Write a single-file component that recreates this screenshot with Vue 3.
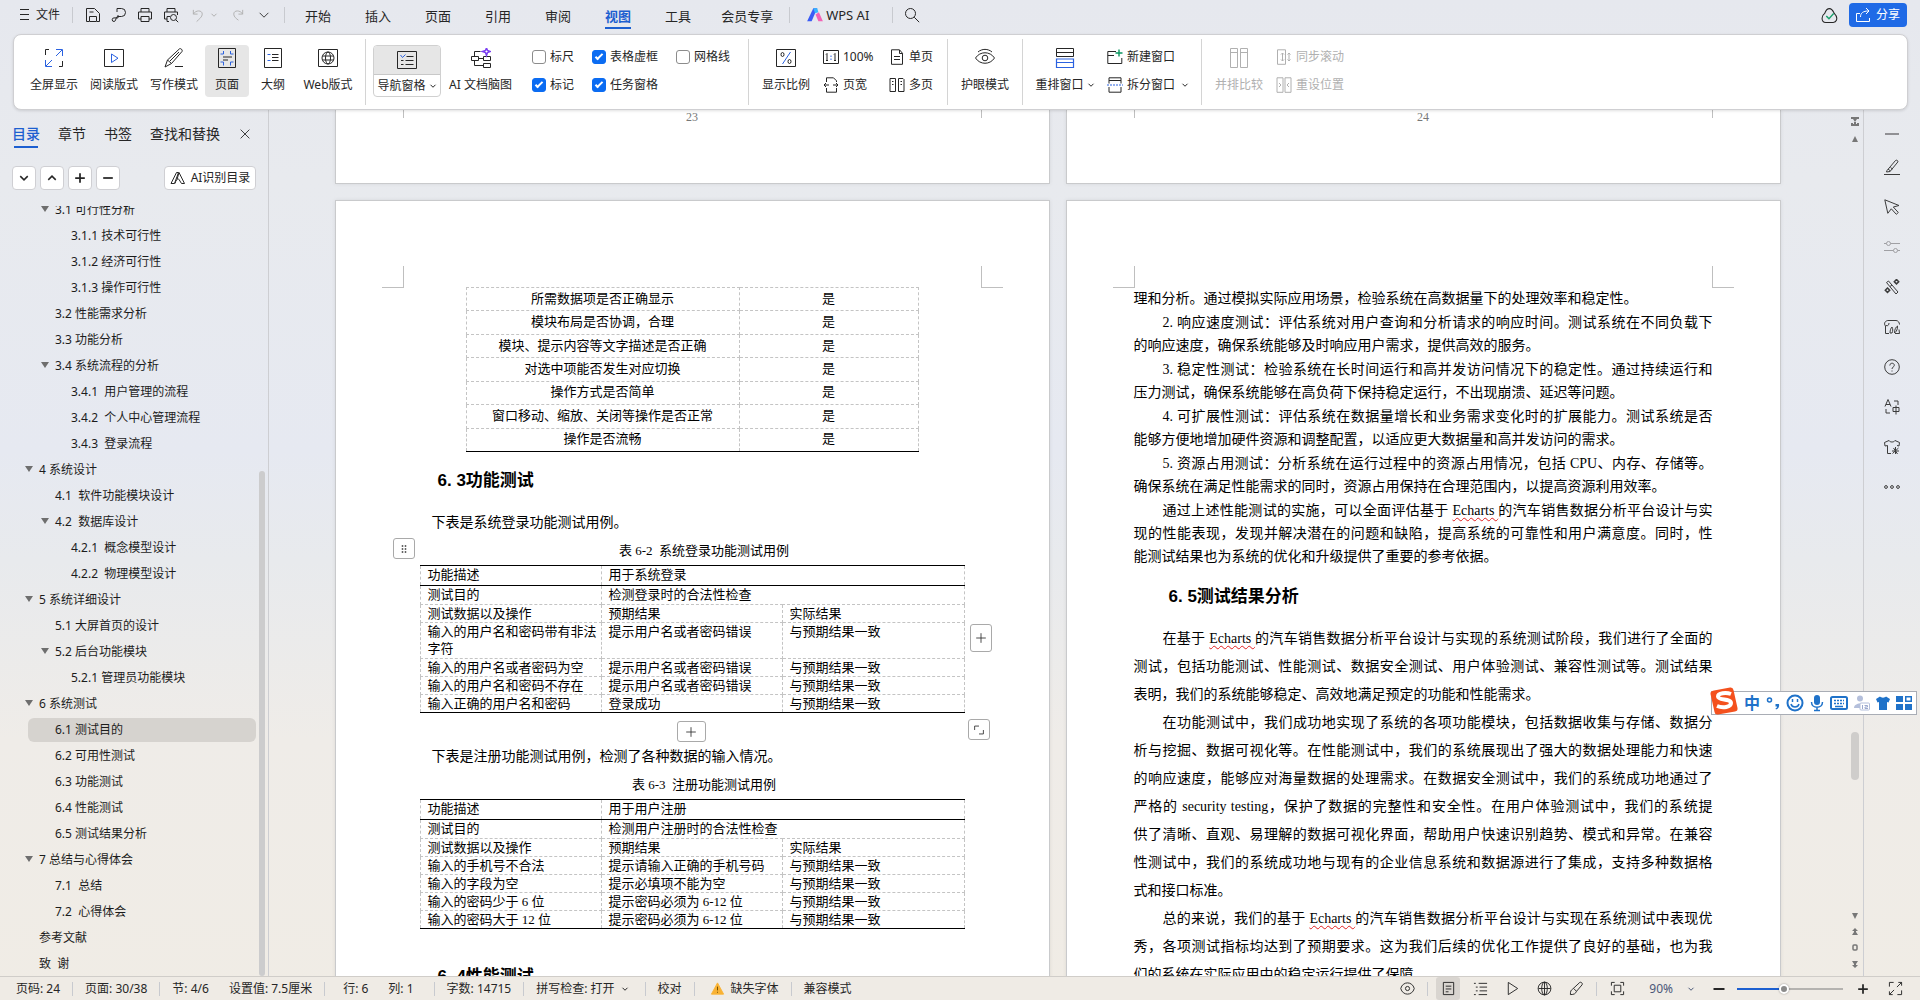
<!-- App.vue -->
<script setup>
import { ref, h } from 'vue';

// line icons, drawn with currentColor unless an accent is needed
const icons = {
  menu: '<path d="M1 2.5h9M1 7.5h9M1 12.5h9"/>',
  save: '<path d="M4 14.5H1.5V1.5h8l5 5v8H12M4.5 14.5v-5h7v5zM4.5 5h4"/>',
  export: '<path d="M6 5V1.5h4.5a4 4 0 0 1 0 8H6.5c-2 0-1 5-3.5 5a1.8 1.8 0 0 1 0-3.6h4V8"/>',
  print: '<path d="M4 5V1.5h8V5M4 12H1.5V5h13v7H12M4 9.5h8v5H4z"/>',
  preview: '<path d="M4 5V1.5h8V5M4 12H1.5V5h13v3M6 14.5H4v-5h3"/><circle cx="10.5" cy="10.5" r="3"/><path d="M12.8 12.8l2.4 2.4"/>',
  undo: '<path d="M2.5 2v4.5h4.5M2.5 6.5C5 2 12 2 12 6.5c0 3-3 5-6 8"/>',
  redo: '<path d="M13.5 2v4.5H9M13.5 6.5C11 2 4 2 4 6.5c0 3 3 5 5 6.5"/>',
  down: '<path d="M3 5.5l5 5 5-5"/>',
  up: '<path d="M3 10.5l5-5 5 5"/>',
  search: '<circle cx="6.5" cy="6.5" r="5"/><path d="M10.2 10.2l5 5"/>',
  cloud: '<path d="M8 1.5c2 0 3 1.5 4.5 4.5 2 2 3 4 2 6.5-.5 1.5-1.5 2-3 2h-7c-2 0-3.5-1.5-3.5-4 0-2 1-3.5 2.5-4.5C4.5 3 6 1.5 8 1.5z"/><path d="M5 8.5l2.5 2.5L12 6" stroke="#16a06a" stroke-width="1.4"/>',
  share: '<path d="M5 6.5H1.5v8h13V11M5.5 10c0-4 2.5-6 8-6M11 1l3 3-3 3"/>',
  wps: '<path d="M1 13.5L6.5 2H10L5 13.5z" fill="#3a5bf5" stroke="none"/><path d="M6.5 2H10l1 3.5-3 1z" fill="#36b4ff" stroke="none"/><path d="M8.5 7.5l3-2 3.5 8h-4z" fill="#f263b5" stroke="none"/>',
  close: '<path d="M3 3l10 10M13 3L3 13"/>',
  plus: '<path d="M8 2.5v11M2.5 8h11"/>',
  minus: '<path d="M2.5 8h11"/>',
  ai: '<path d="M1 13.5L6.5 2.5h2L4.5 13.5zM7 9.5l2-7 5.5 11h-3L9 9.5c-1-1.5-3 0-4 4"/>',
  full: '<path d="M5 1.5H1.5V7M15 18.5h3.5V13"/><path stroke="#2b62e0" d="M12 1.5h6.5V8M18 2l-6 6M8 18.5H1.5V12M2 18l6-6"/>',
  read: '<path d="M.5 1.5h19v17H.5z"/><path stroke="#2b62e0" d="M7.5 6v8.5l6.5-4.3z"/>',
  write: '<path d="M1 19l2.5-7L15.5.8c1-.8 3.5 1 2.5 2.7L7.5 15.5zM3.5 12l4 3.5M6 13l9-9M11 18.5h8"/>',
  page: '<path d="M1.5.5h17v19h-17z"/><path stroke="#2b62e0" d="M6.500 3v3H3.500M13.500 3v3h3M3.500 14h3v3.500M16.500 14h-3v3.500"/><path d="M6 9h9M6 12h5"/>',
  outline: '<path d="M1.5.5h17v19h-17z"/><path stroke="#2b62e0" d="M4.5 6.5h3M4.5 12.5h3"/><path d="M9 6.5h6.5M9 9.5h6.5M9 12.5h6.5"/>',
  web: '<path d="M.5 1.5h19v17H.5z"/><circle cx="10" cy="10" r="6"/><ellipse cx="10" cy="10" rx="2.5" ry="6"/><path d="M4.5 8h11M4.5 12h11"/>',
  nav: '<path d="M.5 1.5h19v17H.5z"/><path stroke="#2b62e0" d="M3.5 5l2 2.5 3-3"/><path d="M9.5 6.5h7M4 10.5h2.5M8.5 10.5h8M4 14.5h2.5M8.5 14.5h8"/>',
  mind: '<path d="M.5 8.5h7v4h-7zM12.5 8.5h7v4h-7zM12.5 15.5h7v4h-7zM7.5 10.5h5M3.5 8.5v-5h6M3.5 12.5v5h9"/><path stroke="#7b3ff2" stroke-width="1.5" d="M15.5 0l1 2.500 3 1-3 1-1 3-1-3-3-1 3-1z"/>',
  ratio: '<path d="M.5 1.5h19v17H.5z"/><path stroke="#2b62e0" d="M14.5 4l-8 12"/><ellipse cx="6.5" cy="6.5" rx="1.5" ry="2"/><ellipse cx="13.5" cy="13.5" rx="1.5" ry="2"/>',
  one: '<path d="M.5 1.5h15v13H.5zM3 5.5l1-1v7M11 5.5l1-1v7M3 11.5h2M11 11.5h2"/><path stroke="#2b62e0" d="M8 6.5V8M8 9.5V11"/>',
  width: '<path d="M3.5 5V.8h7l3 3V5M3.5 11v4.2h10V11M1 8h5M10 8h5M3 6L1 8l2 2M13 6l2 2-2 2"/>',
  single: '<path d="M2.5.8h8l3 3.5v11h-11zM10.5 1v3.5h3M5 7.5h6M5 10.5h6"/>',
  multi: '<path d="M1 1.5h5.5v13H1zM9.500 1.500H14l1 1v12H9.500zM3 4.500h1.500M3 7.500h1.500M11.500 4.500H13M11.500 7.500H13"/>',
  eye: '<path d="M.5 10c4.500-7 14.500-7 19 0-4.500 7-14.500 7-19 0zM3 4c4-3.500 10-3.500 14 0"/><circle cx="10" cy="10" r="2.8"/>',
  arrange: '<path d="M1.5.5h17v8h-17zM1.5 4.5h17"/><path stroke="#2b62e0" stroke-width="1.2" d="M1.5 11h17v8.5h-17zM1.5 14.5h17"/>',
  newwin: '<path d="M9 2.5H.8v12h14V9M.8 6.5H7"/><path stroke="#0b9660" stroke-width="1.4" d="M12 .5v7M8.5 4h7"/>',
  split: '<path d="M2 6.5V.8h12v5.7M2 3.5h12M2 10v5.2h12V10"/><path stroke="#2b62e0" stroke-dasharray="2 1" d="M0 8h16"/>',
  compare: '<path d="M1.5.5h7v19h-7zM11.5.5h7v19h-7zM1.5 4.5h7M11.5 4.5h7"/>',
  sync: '<path d="M1.5.8h8v14.5h-8zM6.5 4v8M5 5.5L6.5 4 8 5.5M5 10.5L6.5 12 8 10.5M13 4v8M11.5 5.5L13 4l1.5 1.5M11.5 10.5L13 12l1.5-1.5"/>',
  reset: '<path d="M1 .8h6v14.5H1zM9 .8h6v14.5H9zM3 6l2 2-2 2M13 6l-2 2 2 2"/>',
  pen: '<path d="M3 11.5L11.5 1.5c1-1 3 .3 2.3 1.5L6 12.500l-3.500.5zM4 10l2.500 2M0 15.500h16M6.500 8.500l2 1.500"/>',
  cursor: '<path d="M.8.8l3 13.500 3.500-4.500 5 5.500 2-1.800-5-5.500 5.700-1.500z"/>',
  sliders: '<circle cx="4.5" cy="4.5" r="2"/><circle cx="11.5" cy="11.5" r="2"/><path d="M0 4.5h2.5M6.5 4.5H16M0 11.5h9.5M13.5 11.5H16"/>',
  magic: '<path d="M2.5 3.500l2-1.500 9.500 11-2 2zM6 7.500l2-1.500"/><path d="M12.500 .5l2.200 2.200-2.200 2.200-2.200-2.200zM3.500 9l2.200 2.200-2.200 2.200-2.200-2.200z" stroke-width="1.500"/>',
  image: '<path d="M5 14.5H1.5V7C-1 4 2 1.500 4 1.500h8c2 0 3.500 2 3.500 4M2 6.500C4 7.500 5 5.500 5 4"/><path d="M6 14c0-3 1-5 2-6 1 2 1 4 0 6zM10.500 14c0-4 1.500-6 3-7 0 3-.5 5-3 7zM11 14.500h4.500l-.5-4"/>',
  help: '<circle cx="8" cy="8" r="7.3"/><path d="M5.800 6.500c0-3 4.500-3 4.500-.2C10.300 8 8 8 8 10M8 11.500v1"/>',
  translate: '<path d="M1 7.500L4 .5l3 7M2 5.500h4M10 2h4v4M2 10v4h4M9 8.500h6v4H9zM12 6.500v9"/>',
  shirt: '<path d="M7 14.500H3.500v-8L1 7 .5 3.500 5 1.500c1 2 5 2 6 0l4.500 2L15 7l-2-.5"/><path d="M8.500 14.500l6-5.500M9.500 9l4 6M8 12h7M11.500 8v7"/>',
  dots: '<circle cx="2" cy="8" r="1.4"/><circle cx="8" cy="8" r="1.4"/><circle cx="14" cy="8" r="1.4"/>',
  grip: '<path stroke-width="2" stroke-dasharray="2 2" d="M6 3v10M10 3v10"/>',
  expand: '<path d="M3 8V3.5h5M13 8v4.5H8"/>',
  eyes: '<path d="M.8 8c2-8 12.400-8 14.400 0-2 8-12.400 8-14.400 0z"/><circle cx="8" cy="8" r="2.2"/>',
  doc: '<path d="M2.500 1.500h11v13h-11zM5 5.500h6M5 8.500h6M5 11.500h3"/>',
  list: '<path d="M1 2.500h2M6 2.500h9M3 6.500h2M7 6.500h8M3 10.500h2M7 10.500h8M1 14.500h2M6 14.500h9"/>',
  play: '<path d="M3.500 1.500v13L13.500 8z"/>',
  globe: '<circle cx="8" cy="8" r="6.8"/><ellipse cx="8" cy="8" rx="3" ry="6.8"/><path d="M1.500 8h13M8 1v14"/>',
  brush: '<path d="M1.500 14.500c0-4 .5-4.500 2.500-6l7.500-7c1-.8 3.500.8 2.500 2.500L8 11c-1 2.500-2.500 3.500-6.500 3.500zM5 8l3 3"/>',
  fit: '<path d="M5 1.500H1.500V5M11 1.500h3.500V5M5 14.500H1.500V11M11 14.500h3.500V11M4.500 4.500h7v7h-7z"/>',
  corners: '<path d="M1.500 6V1.500H6M14.500 10v4.500H10M9.500 6.500l5-5M11 1.500h3.500V5M6.500 9.500l-5 5M1.500 11v3.500H5"/>',
  warn: '<path d="M8 2l6.500 12h-13z" fill="#f9b233" stroke="#f9b233" stroke-linejoin="round"/><path stroke="#6b4a00" d="M8 6v4M8 11.500v1"/>',
};

const Icon = (props) =>
  h('svg', {
    width: props.size || 16,
    height: props.size || 16,
    viewBox: `0 0 ${props.box || 16} ${props.box || 16}`,
    fill: 'none',
    stroke: 'currentColor',
    'stroke-width': props.bold ? 2 : 1,
    'aria-hidden': 'true',
    innerHTML: icons[props.name],
  });
Icon.props = ['name', 'size', 'box', 'bold'];

const menus = ['开始', '插入', '页面', '引用', '审阅', '视图', '工具', '会员专享'];
const activeMenu = ref('视图');

const viewModes = [
  { icon: 'full', label: '全屏显示' },
  { icon: 'read', label: '阅读版式' },
  { icon: 'write', label: '写作模式' },
  { icon: 'page', label: '页面', narrow: true },
  { icon: 'outline', label: '大纲', narrow: true },
  { icon: 'web', label: 'Web版式' },
];
const activeMode = ref('页面');

const checks = ref([
  { label: '标尺', on: false },
  { label: '表格虚框', on: true },
  { label: '网格线', on: false },
  { label: '标记', on: true },
  { label: '任务窗格', on: true },
]);

const panes = ['目录', '章节', '书签', '查找和替换'];
const activePane = ref('目录');

const outline = [
  { level: 2, text: '3.1 可行性分析', open: true },
  { level: 3, text: '3.1.1 技术可行性' },
  { level: 3, text: '3.1.2 经济可行性' },
  { level: 3, text: '3.1.3 操作可行性' },
  { level: 2, text: '3.2 性能需求分析' },
  { level: 2, text: '3.3 功能分析' },
  { level: 2, text: '3.4 系统流程的分析', open: true },
  { level: 3, text: '3.4.1  用户管理的流程' },
  { level: 3, text: '3.4.2  个人中心管理流程' },
  { level: 3, text: '3.4.3  登录流程' },
  { level: 1, text: '4 系统设计', open: true },
  { level: 2, text: '4.1  软件功能模块设计' },
  { level: 2, text: '4.2  数据库设计', open: true },
  { level: 3, text: '4.2.1  概念模型设计' },
  { level: 3, text: '4.2.2  物理模型设计' },
  { level: 1, text: '5 系统详细设计', open: true },
  { level: 2, text: '5.1 大屏首页的设计' },
  { level: 2, text: '5.2 后台功能模块', open: true },
  { level: 3, text: '5.2.1 管理员功能模块' },
  { level: 1, text: '6 系统测试', open: true },
  { level: 2, text: '6.1 测试目的' },
  { level: 2, text: '6.2 可用性测试' },
  { level: 2, text: '6.3 功能测试' },
  { level: 2, text: '6.4 性能测试' },
  { level: 2, text: '6.5 测试结果分析' },
  { level: 1, text: '7 总结与心得体会', open: true },
  { level: 2, text: '7.1  总结' },
  { level: 2, text: '7.2  心得体会' },
  { level: 1, text: '参考文献' },
  { level: 1, text: '致  谢' },
];
const current = ref('6.1 测试目的');

const usability = [
  '所需数据项是否正确显示',
  '模块布局是否协调，合理',
  '模块、提示内容等文字描述是否正确',
  '对选中项能否发生对应切换',
  '操作方式是否简单',
  '窗口移动、缩放、关闭等操作是否正常',
  '操作是否流畅',
];

const loginCase = {
  desc: '用于系统登录',
  goal: '检测登录时的合法性检查',
  rows: [
    ['输入的用户名和密码带有非法字符', '提示用户名或者密码错误'],
    ['输入的用户名或者密码为空', '提示用户名或者密码错误'],
    ['输入的用户名和密码不存在', '提示用户名或者密码错误'],
    ['输入正确的用户名和密码', '登录成功'],
  ],
};
const registerCase = {
  desc: '用于用户注册',
  goal: '检测用户注册时的合法性检查',
  rows: [
    ['输入的手机号不合法', '提示请输入正确的手机号码'],
    ['输入的字段为空', '提示必填项不能为空'],
    ['输入的密码少于 6 位', '提示密码必须为 6-12 位'],
    ['输入的密码大于 12 位', '提示密码必须为 6-12 位'],
  ],
};

const perfParas = [
  ['理和分析。通过模拟实际应用场景，检验系统在高数据量下的处理效率和稳定性。'],
  ['2. 响应速度测试：评估系统对用户查询和分析请求的响应时间。测试系统在不同负载下', '的响应速度，确保系统能够及时响应用户需求，提供高效的服务。'],
  ['3. 稳定性测试：检验系统在长时间运行和高并发访问情况下的稳定性。通过持续运行和', '压力测试，确保系统能够在高负荷下保持稳定运行，不出现崩溃、延迟等问题。'],
  ['4. 可扩展性测试：评估系统在数据量增长和业务需求变化时的扩展能力。测试系统是否', '能够方便地增加硬件资源和调整配置，以适应更大数据量和高并发访问的需求。'],
  ['5. 资源占用测试：分析系统在运行过程中的资源占用情况，包括 CPU、内存、存储等。', '确保系统在满足性能需求的同时，资源占用保持在合理范围内，以提高资源利用效率。'],
  ['通过上述性能测试的实施，可以全面评估基于 Echarts 的汽车销售数据分析平台设计与实', '现的性能表现，发现并解决潜在的问题和缺陷，提高系统的可靠性和用户满意度。同时，性', '能测试结果也为系统的优化和升级提供了重要的参考依据。'],
];
const resultParas = [
  ['在基于 Echarts 的汽车销售数据分析平台设计与实现的系统测试阶段，我们进行了全面的', '测试，包括功能测试、性能测试、数据安全测试、用户体验测试、兼容性测试等。测试结果', '表明，我们的系统能够稳定、高效地满足预定的功能和性能需求。'],
  ['在功能测试中，我们成功地实现了系统的各项功能模块，包括数据收集与存储、数据分', '析与挖掘、数据可视化等。在性能测试中，我们的系统展现出了强大的数据处理能力和快速', '的响应速度，能够应对海量数据的处理需求。在数据安全测试中，我们的系统成功地通过了', '严格的 security testing，保护了数据的完整性和安全性。在用户体验测试中，我们的系统提', '供了清晰、直观、易理解的数据可视化界面，帮助用户快速识别趋势、模式和异常。在兼容', '性测试中，我们的系统成功地与现有的企业信息系统和数据源进行了集成，支持多种数据格', '式和接口标准。'],
  ['总的来说，我们的基于 Echarts 的汽车销售数据分析平台设计与实现在系统测试中表现优', '秀，各项测试指标均达到了预期要求。这为我们后续的优化工作提供了良好的基础，也为我', '们的系统在实际应用中的稳定运行提供了保障。'],
];
const splitTypos = (line) => line.split(/(Echarts )/);

const tools = ['pen', 'cursor', 'sliders', 'magic', 'image', 'help', 'translate', 'shirt', 'dots'];
const zoom = ref(44);
</script>

<template>
  <div class="app">
    <header class="titlebar">
      <button class="flat file"><Icon name="menu" />文件</button>
      <i class="bar"></i>
      <div class="quick">
        <button class="flat" aria-label="保存"><Icon name="save" /></button>
        <button class="flat" aria-label="输出"><Icon name="export" /></button>
        <button class="flat" aria-label="打印"><Icon name="print" /></button>
        <button class="flat" aria-label="打印预览"><Icon name="preview" /></button>
      </div>
      <div class="history">
        <button class="flat dim undo" aria-label="撤销"><Icon name="undo" size="15" /><Icon name="down" size="8" bold="1" /></button>
        <button class="flat dim" aria-label="恢复"><Icon name="redo" size="15" /></button>
        <button class="flat" aria-label="更多"><Icon name="down" size="14" /></button>
      </div>
      <i class="bar"></i>
      <nav class="menus">
        <button
          v-for="menu in menus"
          :key="menu"
          class="flat menu"
          :class="{ active: menu === activeMenu, long: menu.length > 2 }"
          @click="activeMenu = menu"
        >{{ menu }}</button>
      </nav>
      <i class="bar"></i>
      <button class="flat wps"><Icon name="wps" size="18" />WPS AI</button>
      <i class="bar"></i>
      <button class="flat find" aria-label="搜索"><Icon name="search" /></button>
      <span class="spacer"></span>
      <button class="flat cloud" aria-label="云同步"><Icon name="cloud" size="17" /></button>
      <button class="share"><Icon name="share" />分享</button>
    </header>

    <section class="ribbon">
      <button
        v-for="mode in viewModes"
        :key="mode.label"
        class="flat big"
        :class="{ narrow: mode.narrow, on: mode.label === activeMode }"
        @click="activeMode = mode.label"
      ><Icon :name="mode.icon" size="20" box="20" />{{ mode.label }}</button>
      <i class="rule"></i>
      <button class="flat big nav">
        <span class="nav-top"><Icon name="nav" size="20" box="20" /></span>
        <span>导航窗格<Icon class="caret" name="down" size="8" bold="1" /></span>
      </button>
      <button class="flat big mind"><Icon name="mind" size="20" box="20" />AI 文档脑图</button>
      <div class="checks">
        <label v-for="item in checks" :key="item.label"><input v-model="item.on" type="checkbox" />{{ item.label }}</label>
      </div>
      <i class="rule"></i>
      <button class="flat big"><Icon name="ratio" size="20" box="20" />显示比例</button>
      <div class="pairs zooms">
        <button class="flat"><Icon name="one" />100%</button>
        <button class="flat"><Icon name="single" />单页</button>
        <button class="flat"><Icon name="width" />页宽</button>
        <button class="flat"><Icon name="multi" />多页</button>
      </div>
      <i class="rule"></i>
      <button class="flat big"><Icon name="eye" size="20" box="20" />护眼模式</button>
      <i class="rule"></i>
      <button class="flat big arrange"><Icon name="arrange" size="20" box="20" /><span>重排窗口<Icon class="caret" name="down" size="8" bold="1" /></span></button>
      <div class="pairs single">
        <button class="flat"><Icon name="newwin" />新建窗口</button>
        <button class="flat"><Icon name="split" />拆分窗口<Icon class="caret" name="down" size="8" bold="1" /></button>
      </div>
      <i class="rule"></i>
      <button class="flat big dim"><Icon name="compare" size="20" box="20" />并排比较</button>
      <div class="pairs single dim">
        <button class="flat"><Icon name="sync" />同步滚动</button>
        <button class="flat"><Icon name="reset" />重设位置</button>
      </div>
    </section>

    <main class="work">
      <aside class="sidebar">
        <div class="panes">
          <button
            v-for="pane in panes"
            :key="pane"
            class="flat pane"
            :class="{ active: pane === activePane }"
            @click="activePane = pane"
          >{{ pane }}</button>
          <button class="flat" aria-label="关闭"><Icon name="close" size="14" /></button>
        </div>
        <div class="tree-tools">
          <button class="box" aria-label="展开"><Icon name="down" size="12" bold="1" /></button>
          <button class="box" aria-label="收起"><Icon name="up" size="12" bold="1" /></button>
          <button class="box" aria-label="增加"><Icon name="plus" size="14" bold="1" /></button>
          <button class="box" aria-label="减少"><Icon name="minus" size="14" bold="1" /></button>
          <span class="spacer"></span>
          <button class="box ai"><Icon name="ai" />AI识别目录</button>
        </div>
        <div class="tree-wrap">
          <ul class="tree">
            <li v-for="item in outline" :key="item.text">
              <a
                href="#"
                :class="['l' + item.level, { open: item.open, current: item.text === current }]"
                @click.prevent="current = item.text"
              >{{ item.text }}</a>
            </li>
          </ul>
          <i class="tree-thumb"></i>
        </div>
      </aside>

      <div class="canvas">
        <div class="sheet tail"><i class="edge left"></i>23<i class="edge right"></i></div>
        <div class="sheet tail"><i class="edge left"></i>24<i class="edge right"></i></div>

        <article class="sheet">
          <i class="corner left"></i><i class="corner right"></i>
          <table class="grid usability">
            <tbody>
              <tr v-for="row in usability" :key="row"><td>{{ row }}</td><td>是</td></tr>
            </tbody>
          </table>
          <h2>6. 3功能测试</h2>
          <p class="lead">下表是系统登录功能测试用例。</p>
          <p class="caption">表 6-2&nbsp; 系统登录功能测试用例</p>
          <div class="case">
            <table class="grid">
              <colgroup><col /><col /><col /></colgroup>
              <tbody>
                <tr class="head"><td>功能描述</td><td colspan="2">{{ loginCase.desc }}</td></tr>
                <tr class="goal"><td>测试目的</td><td colspan="2">{{ loginCase.goal }}</td></tr>
                <tr><td>测试数据以及操作</td><td>预期结果</td><td>实际结果</td></tr>
                <tr v-for="row in loginCase.rows" :key="row[0]" :class="{ tall: row[0].length > 13 }"><td>{{ row[0] }}</td><td>{{ row[1] }}</td><td>与预期结果一致</td></tr>
              </tbody>
            </table>
            <button class="handle move" aria-label="移动表格"><Icon name="grip" size="12" /></button>
            <button class="handle add-col" aria-label="添加列"><Icon name="plus" size="14" /></button>
            <button class="handle add-row" aria-label="添加行"><Icon name="plus" size="14" /></button>
            <button class="handle resize" aria-label="调整表格"><Icon name="expand" size="14" /></button>
          </div>
          <p class="lead second">下表是注册功能测试用例，检测了各种数据的输入情况。</p>
          <p class="caption">表 6-3&nbsp; 注册功能测试用例</p>
          <div class="case">
            <table class="grid">
              <colgroup><col /><col /><col /></colgroup>
              <tbody>
                <tr class="head"><td>功能描述</td><td colspan="2">{{ registerCase.desc }}</td></tr>
                <tr class="goal"><td>测试目的</td><td colspan="2">{{ registerCase.goal }}</td></tr>
                <tr><td>测试数据以及操作</td><td>预期结果</td><td>实际结果</td></tr>
                <tr v-for="row in registerCase.rows" :key="row[0]"><td>{{ row[0] }}</td><td>{{ row[1] }}</td><td>与预期结果一致</td></tr>
              </tbody>
            </table>
          </div>
          <h2 class="next">6. 4性能测试</h2>
        </article>

        <article class="sheet">
          <i class="corner left"></i><i class="corner right"></i>
          <div class="paras tight">
            <p v-for="(para, i) in perfParas" :key="i" :class="{ indent: i > 0 }">
              <span v-for="line in para" :key="line" class="line"><template v-for="(part, k) in splitTypos(line)" :key="k"><u v-if="k % 2">{{ part }}</u><template v-else>{{ part }}</template></template></span>
            </p>
          </div>
          <h2>6. 5测试结果分析</h2>
          <div class="paras loose">
            <p v-for="(para, i) in resultParas" :key="i" class="indent">
              <span v-for="line in para" :key="line" class="line"><template v-for="(part, k) in splitTypos(line)" :key="k"><u v-if="k % 2">{{ part }}</u><template v-else>{{ part }}</template></template></span>
            </p>
          </div>
        </article>
      </div>

      <div class="scroller">
        <svg width="10" height="10" viewBox="0 0 10 10"><path d="M1 0h8v2H7L5 5 3 2H1zM1 9V6h2v1h1V5h2v2h1V6h2v3z" fill="#777" /></svg>
        <svg width="8" height="8" viewBox="0 0 8 8"><path d="M4 1l3 6H1z" fill="#777" /></svg>
        <span class="track"><i></i></span>
        <svg width="8" height="8" viewBox="0 0 8 8"><path d="M4 7L1 1h6z" fill="#777" /></svg>
        <svg width="8" height="8" viewBox="0 0 8 8"><path d="M4 0l3 3H5v1l2 3H1l2-3V3H1z" fill="#777" /></svg>
        <svg width="8" height="8" viewBox="0 0 8 8"><rect x="2" y="1" width="4" height="5" rx="1" fill="none" stroke="#777" stroke-width="1.5" /></svg>
        <svg width="8" height="8" viewBox="0 0 8 8"><path d="M4 8L1 5h2V4L1 1h6L5 4v1h2z" fill="#777" /></svg>
      </div>

      <aside class="toolbox">
        <i class="collapse"></i>
        <button v-for="tool in tools" :key="tool" class="flat" :class="{ dim: tool === 'sliders' }" :aria-label="tool"><Icon :name="tool" /></button>
      </aside>
    </main>

    <footer class="status">
      <span>页码: 24</span><i class="bar"></i>
      <span>页面: 30/38</span><i class="bar"></i>
      <span>节: 4/6</span><span class="apart">设置值: 7.5厘米</span><i class="bar"></i>
      <span class="cell">行: 6</span><span class="apart">列: 1</span><i class="bar wide"></i>
      <span>字数: 14715</span><i class="bar"></i>
      <button class="flat spell">拼写检查: 打开<Icon class="caret" name="down" size="8" bold="1" /></button><i class="bar"></i>
      <button class="flat">校对</button><i class="bar"></i>
      <button class="flat missing"><Icon name="warn" size="15" />缺失字体</button><i class="bar"></i>
      <span>兼容模式</span>
      <span class="spacer"></span>
      <div class="views">
        <button class="flat" aria-label="护眼"><Icon name="eyes" size="15" /></button>
        <i class="bar"></i>
        <div class="modes">
          <button class="flat on" aria-label="页面视图"><Icon name="doc" size="15" /></button>
          <button class="flat" aria-label="大纲视图"><Icon name="list" size="15" /></button>
          <button class="flat" aria-label="阅读视图"><Icon name="play" size="15" /></button>
          <button class="flat" aria-label="Web视图"><Icon name="globe" size="15" /></button>
          <button class="flat" aria-label="写作视图"><Icon name="brush" size="15" /></button>
        </div>
        <i class="bar"></i>
        <button class="flat" aria-label="适合页面"><Icon name="fit" size="15" /></button>
      </div>
      <button class="flat percent">90%<Icon name="down" size="8" bold="1" /></button>
      <button class="flat" aria-label="缩小"><Icon name="minus" size="16" bold="1" /></button>
      <input v-model="zoom" class="zoom" type="range" min="0" max="100" aria-label="缩放" />
      <button class="flat" aria-label="放大"><Icon name="plus" size="14" bold="1" /></button>
      <button class="flat corners" aria-label="全屏"><Icon name="corners" size="15" /></button>
    </footer>

    <div class="ime">
      <svg class="ime-logo" width="28" height="28" viewBox="0 0 28 28">
        <path d="M4 3.5L20 .5q3-.5 3.5 2.5l4 18q.5 3-2.5 3.5l-17 3q-3 .5-3.5-2.5L.5 7q-.5-3 3.5-3.5z" fill="#f4511e" />
        <path d="M21 7c-5-2-13-1-13 2.5 0 4 13 2 13 6.5 0 4-8 5.5-14 3" fill="none" stroke="#fff" stroke-width="4" />
      </svg>
      <span class="zh">中</span>
      <svg width="14" height="16" viewBox="0 0 14 16"><circle cx="3.5" cy="5" r="2" fill="none" stroke="#1f72c9" stroke-width="1.5" /><path d="M9.5 9h3.5c.5 3-.5 4.5-3 5.5l-.5-1c1-.5 1.5-1 1.5-2H9.5z" fill="#1f72c9" /></svg>
      <svg width="18" height="18" viewBox="0 0 18 18" fill="none" stroke="#1f72c9" stroke-width="2"><circle cx="9" cy="9" r="7.5" /><path d="M5 10c1 4 7 4 8 0M6.5 5v3M11.5 5v3" stroke-width="1.5" /></svg>
      <svg width="14" height="18" viewBox="0 0 14 18"><rect x="4" y="1" width="6" height="10" rx="3" fill="#1f72c9" /><path d="M1.5 8c0 7 11 7 11 0M7 13v4M4 16.5h6" fill="none" stroke="#1f72c9" stroke-width="1.5" /></svg>
      <svg width="18" height="16" viewBox="0 0 18 16"><rect x="1" y="2" width="16" height="12" rx="1.5" fill="none" stroke="#1f72c9" stroke-width="2" /><path d="M4 5.5h10M4 8.5h10" stroke="#1f72c9" stroke-width="1.5" stroke-dasharray="2 1" /><path d="M5 11.5h8" stroke="#1f72c9" stroke-width="1.5" /></svg>
      <svg width="16" height="18" viewBox="0 0 16 18"><circle cx="6" cy="4.5" r="3" fill="#b4bfdb" /><path d="M0 14c0-6 12-6 12 0z" fill="#b4bfdb" /><rect x="6" y="9" width="9.5" height="7" rx="1" fill="#fff" stroke="#b4bfdb" /><path d="M8.5 11v4M10.5 11.5h3v1.5h-2.5v1.5h3" fill="none" stroke="#9aa8ce" /></svg>
      <svg width="14" height="16" viewBox="0 0 14 16"><path d="M4 1.5c1 1.5 5 1.5 6 0l4 2.5-1.5 3.5L11 7v8H3V7l-1.5.5L0 4z" fill="#1f72c9" /></svg>
      <svg width="16" height="16" viewBox="0 0 16 16" fill="#1f72c9"><path d="M0 1h7v6H0zM0 9h7v6H0zM9 9h7v6H9z" /><rect x="9.75" y="1.75" width="5.5" height="4.5" fill="none" stroke="#1f72c9" stroke-width="1.5" /></svg>
    </div>
  </div>
</template>

<style>
body {
  overflow: hidden;
}
</style>

<style scoped>
.app {
  position: relative;
  display: flex;
  flex-direction: column;
  height: 100vh;
  overflow: hidden;
  background: linear-gradient(180deg, #e6e8ee 0%, #e8eaee 18%, #e6e9f1 45%, #e8eaed 56%, #efece8 74%, #f0ece5 100%);
  color: #262626;
  font-family: "Noto Sans", "Noto Sans CJK SC", sans-serif;
  font-size: 12px;
  line-height: 18px;
}
.app *,
.app *::before,
.app *::after {
  box-sizing: border-box;
}
svg {
  display: block;
  flex: none;
}
button {
  font: inherit;
  color: inherit;
  margin: 0;
  padding: 0;
  cursor: pointer;
}
.flat {
  display: flex;
  align-items: center;
  border: 0;
  background: none;
  white-space: nowrap;
}
.spacer {
  flex: 1;
}
.dim {
  color: #b0b0b0;
}
.bar {
  width: 1px;
  height: 16px;
  background: #c8cacf;
}

/* title bar */
.titlebar {
  display: flex;
  align-items: center;
  flex: none;
  height: 34px;
  padding: 0 13px 4px 19px;
}
.file {
  gap: 1px;
  margin-right: 12px;
}
.quick {
  display: flex;
  gap: 10px;
  margin-left: 12px;
}
.history {
  display: flex;
  gap: 12px;
  margin: 0 13px 0 12px;
}
.undo {
  gap: 4px;
}
.menus {
  display: flex;
  align-self: stretch;
  margin-left: 3px;
}
.menu {
  position: relative;
  padding: 2px 17px 0;
  font-size: 13px;
}
.menu.long {
  padding: 2px 16px 0 13px;
}
.menu.active {
  color: #1d5fd0;
  font-weight: 600;
}
.menu.active::after {
  content: "";
  position: absolute;
  left: 17px;
  right: 17px;
  bottom: 1px;
  height: 2px;
  background: #1d5fd0;
}
.wps {
  gap: 2px;
  margin: 0 23px 0 16px;
  font-size: 13px;
}
.find {
  margin-left: 11px;
}
.cloud {
  margin-right: 11px;
}
.share {
  display: flex;
  align-items: center;
  gap: 5px;
  height: 24px;
  padding: 0 7px 0 6px;
  border: 0;
  border-radius: 4px;
  background: #1f6ae6;
  color: #fff;
}

/* ribbon */
.ribbon {
  position: relative;
  z-index: 2;
  display: flex;
  align-items: flex-start;
  flex: none;
  height: 76px;
  margin: 0 12px 0 13px;
  padding: 10px 0 0 10px;
  border: 1px solid #cfcfd2;
  border-radius: 8px;
  background: #fff;
  box-shadow: 0 1px 3px rgba(0, 0, 0, 0.12);
}
.big {
  flex-direction: column;
  gap: 8px;
  width: 60px;
  height: 52px;
  padding-top: 3px;
  border-radius: 4px;
}
.big > span,
.pairs .flat {
  display: flex;
  align-items: center;
}
.big.narrow {
  width: 44px;
  margin: 0 1px;
}
.big.narrow + .big:not(.narrow) {
  width: 64px;
}
.big.on {
  background: #e6e6e6;
}
.rule {
  width: 1px;
  height: 66px;
  margin: -6px 7px 0;
  background: #d4d4d4;
}
.rule:first-of-type {
  margin-left: 5px;
}
.caret {
  margin-left: 3px;
}
.big.nav {
  width: 68px;
  gap: 2px;
  padding: 0;
  margin-right: 1px;
  border: 1px solid #d0d0d0;
  overflow: hidden;
}
.nav-top {
  justify-content: center;
  width: 100%;
  height: 29px;
  border-bottom: 1px solid #c8c8c8;
  background: #e6e6e6;
}
.big.mind {
  width: 77px;
}
.checks {
  display: grid;
  grid-template-columns: 60px 84px 65px;
  grid-auto-rows: 28px;
  margin: -2px 0 0 13px;
}
.checks label {
  display: flex;
  align-items: center;
  gap: 4px;
}
.checks input {
  appearance: none;
  position: relative;
  width: 14px;
  height: 14px;
  margin: 0;
  border: 1px solid #8c8c8c;
  border-radius: 3px;
  background: #fff;
}
.checks input:checked {
  border-color: #0b6cf2;
  background: #0b6cf2;
}
.checks input:checked::after {
  content: "";
  position: absolute;
  left: 4px;
  top: 1px;
  width: 4px;
  height: 8px;
  border: solid #fff;
  border-width: 0 2px 2px 0;
  transform: rotate(45deg);
}
.pairs {
  display: grid;
  grid-auto-rows: 28px;
  margin: -2px 6px 0 7px;
}
.pairs .flat {
  gap: 4px;
}
.zooms {
  grid-template-columns: 66px 45px;
}
.pairs.single {
  margin-right: 5px;
}
.pairs.single .caret {
  margin-left: 2px;
}
.arrange {
  width: 70px;
}

/* outline pane */
.work {
  display: flex;
  flex: 1;
  min-height: 0;
}
.sidebar {
  display: flex;
  flex-direction: column;
  flex: none;
  width: 269px;
  border-right: 1px solid #cdced2;
}
.panes {
  display: flex;
  gap: 18px;
  height: 38px;
  padding: 9px 0 0 12px;
}
.pane {
  position: relative;
  font-size: 14px;
}
.pane.active {
  color: #1d5fd0;
  font-weight: 500;
}
.pane.active::after {
  content: "";
  position: absolute;
  left: 2px;
  right: 2px;
  bottom: 0;
  height: 2px;
  background: #1d5fd0;
}
.tree-tools {
  display: flex;
  gap: 4px;
  padding: 18px 12px 16px;
}
.box {
  display: flex;
  align-items: center;
  justify-content: center;
  gap: 5px;
  width: 24px;
  height: 24px;
  border: 1px solid #cfcfd3;
  border-radius: 4px;
  background: #fff;
}
.box.ai {
  width: 92px;
}
.tree-wrap {
  position: relative;
  flex: 1;
  min-height: 0;
}
.tree {
  display: flex;
  flex-direction: column;
  justify-content: flex-end;
  height: 100%;
  margin: 0;
  padding: 0 12px 0 28px;
  overflow: hidden;
  list-style: none;
}
.tree li {
  flex: none;
  height: 26px;
  padding: 2px 0 0;
}
.tree a {
  position: relative;
  display: block;
  height: 24px;
  border-radius: 6px;
  color: #1c1c1c;
  line-height: 24px;
  text-decoration: none;
  white-space: pre;
}
.tree .l1 {
  padding-left: 11px;
}
.tree .l2 {
  padding-left: 27px;
}
.tree .l3 {
  padding-left: 43px;
}
.tree .current {
  background: #d6d3cf;
}
.tree .open::before {
  content: "";
  position: absolute;
  top: 8px;
  margin-left: -14px;
  border: 4px solid transparent;
  border-top: 6px solid #6e6e6e;
  border-bottom: 0;
}
.tree-thumb {
  position: absolute;
  right: 3px;
  bottom: 0;
  width: 6px;
  height: 505px;
  border-radius: 3px;
  background: #cccccd;
}

/* document */
.canvas {
  display: grid;
  grid-template-columns: 715px 715px;
  grid-template-rows: 74px auto;
  justify-content: center;
  gap: 16px;
  flex: 1;
  min-width: 0;
  overflow: hidden;
}
.sheet {
  position: relative;
  padding: 86px 67px 0;
  border: 1px solid #c9cacc;
  background: #fff;
  box-shadow: 0 0 4px rgba(0, 0, 0, 0.08);
  color: #000;
  font-family: "Liberation Serif", "Noto Sans CJK SC", serif;
  font-size: 14px;
}
.sheet.tail {
  padding: 0;
  border-top: 0;
  color: #777;
  font-size: 12px;
  line-height: 14px;
  text-align: center;
}
.edge,
.corner {
  position: absolute;
  border: 0 solid #bfbfbf;
}
.edge {
  top: 0;
  width: 1px;
  height: 8px;
  background: #bfbfbf;
}
.edge.left {
  left: 67px;
}
.edge.right {
  right: 67px;
}
.corner {
  top: 65px;
  width: 22px;
  height: 22px;
  border-bottom-width: 1px;
}
.corner.left {
  left: 46px;
  border-right-width: 1px;
}
.corner.right {
  right: 46px;
  border-left-width: 1px;
}
.sheet p {
  margin: 0;
}
.sheet h2 {
  margin: 1px 0 0;
  padding-left: 35px;
  font: 700 17px/56px "Liberation Sans", "Noto Sans CJK SC", sans-serif;
}
.sheet h2.next {
  margin-top: 20px;
}
.lead {
  padding-left: 29px;
  line-height: 28px;
}
.lead.second {
  margin-top: 30px;
}
.caption {
  padding-left: 24px;
  font-size: 13px;
  line-height: 28px;
  text-align: center;
}
.grid {
  width: 100%;
  border-collapse: collapse;
  table-layout: fixed;
  font-size: 13px;
  line-height: 17px;
}
.grid td {
  padding: 0 0 0 7px;
  border: 1px dashed #c4c4c4;
  vertical-align: top;
}
.grid tr:first-child td {
  border-top: 1px solid #000;
}
.grid tr:last-child td {
  border-bottom: 1px solid #000;
}
.grid .head td {
  height: 20px;
  border-bottom: 1px solid #000;
}
.grid .goal td {
  height: 19px;
}
.grid .tall td {
  height: 36px;
}
.usability {
  width: 453px;
  height: 165px;
  margin: 0 auto;
  text-align: center;
}
.grid.usability td {
  padding: 0 0 2px;
  vertical-align: middle;
}
.grid.usability tr:first-child td {
  border-top: 1px dashed #c4c4c4;
}
.usability td:first-child {
  width: 273px;
}
.case {
  position: relative;
  width: 545px;
  margin-left: 17px;
}
.case col {
  width: 181px;
}
.case col:last-child {
  width: auto;
}
.handle {
  position: absolute;
  display: flex;
  align-items: center;
  justify-content: center;
  width: 22px;
  height: 21px;
  border: 1px solid #a9a9a9;
  border-radius: 3px;
  background: #fff;
  color: #333;
}
.move {
  left: -27px;
  top: -27px;
}
.add-col {
  right: -27px;
  top: 59px;
  height: 28px;
}
.add-row {
  left: 257px;
  bottom: -29px;
  width: 29px;
}
.resize {
  right: -25px;
  bottom: -27px;
}
.paras {
  display: flex;
  flex-direction: column;
}
.paras.tight {
  gap: 1px;
  line-height: 23px;
}
.paras.loose {
  line-height: 28px;
}
.line {
  display: block;
  text-align: justify;
  text-align-last: justify;
  white-space: pre-wrap;
}
.line:last-child {
  text-align-last: left;
}
.indent .line:first-child {
  padding-left: 29px;
}
.line u {
  text-decoration: underline wavy #e02020 1px;
  text-underline-offset: 2px;
}

/* right side */
.scroller {
  display: flex;
  flex-direction: column;
  align-items: center;
  gap: 8px;
  flex: none;
  width: 17px;
  padding: 7px 0 8px;
}
.track {
  flex: 1;
  display: flex;
  flex-direction: column;
}
.track::before {
  content: "";
  flex: 589;
}
.track::after {
  content: "";
  flex: 126;
}
.track i {
  flex: 48;
  width: 8px;
  border-radius: 4px;
  background: #cfcdcb;
}
.toolbox {
  display: flex;
  flex-direction: column;
  flex: none;
  width: 57px;
  padding-top: 23px;
  border-left: 1px solid #cdced2;
  color: #3c3c3c;
}
.toolbox .flat {
  justify-content: center;
  height: 40px;
}
.toolbox .dim {
  color: #a0a0a4;
}
.collapse {
  width: 14px;
  height: 2px;
  margin: 0 auto 12px;
  background: #909094;
}

/* status bar */
.status {
  display: flex;
  align-items: center;
  flex: none;
  height: 24px;
  padding: 0 17px 0 16px;
  border-top: 1px solid #d0cdc9;
  background: #efebe5;
  white-space: nowrap;
}
.status .bar {
  height: 14px;
  margin: 0 12px;
}
.cell {
  padding-left: 6px;
}
.status .bar.wide {
  margin-left: 20px;
}
.apart {
  margin-left: 20px;
}
.spell .caret {
  margin: 0 4px 0 6px;
}
.missing {
  gap: 6px;
  margin-left: 3px;
}
.views,
.modes {
  display: flex;
  align-items: center;
}
.modes {
  gap: 8px;
}
.views .flat {
  justify-content: center;
  width: 24px;
  height: 23px;
}
.views .bar {
  margin: 0 8px;
}
.views .on {
  border-radius: 3px;
  background: #d9d5d0;
}
.percent {
  gap: 14px;
  margin: 0 16px 0 20px;
  color: #4a5878;
}
.zoom {
  appearance: none;
  width: 106px;
  height: 2px;
  margin: 0 13px 0 10px;
  background: linear-gradient(90deg, #1d5fd0 44%, #b5b3b0 44%);
}
.zoom::-webkit-slider-thumb {
  appearance: none;
  width: 10px;
  height: 10px;
  border: 2px solid #fff;
  border-radius: 50%;
  background: #8a8a8a;
  box-shadow: 0 0 2px rgba(0, 0, 0, 0.4);
}
.corners {
  margin-left: 18px;
}

/* floating input method bar */
.ime {
  position: absolute;
  right: 3px;
  top: 691px;
  z-index: 3;
  display: flex;
  align-items: center;
  justify-content: space-between;
  width: 206px;
  height: 24px;
  padding: 0 4px 0 0;
  border: 1px solid #a9adb5;
  background: #fff;
}
.ime-logo {
  margin: -4px 0 0 -2px;
}
.zh {
  color: #1f72c9;
  font-size: 16px;
  font-weight: 700;
}
</style>
